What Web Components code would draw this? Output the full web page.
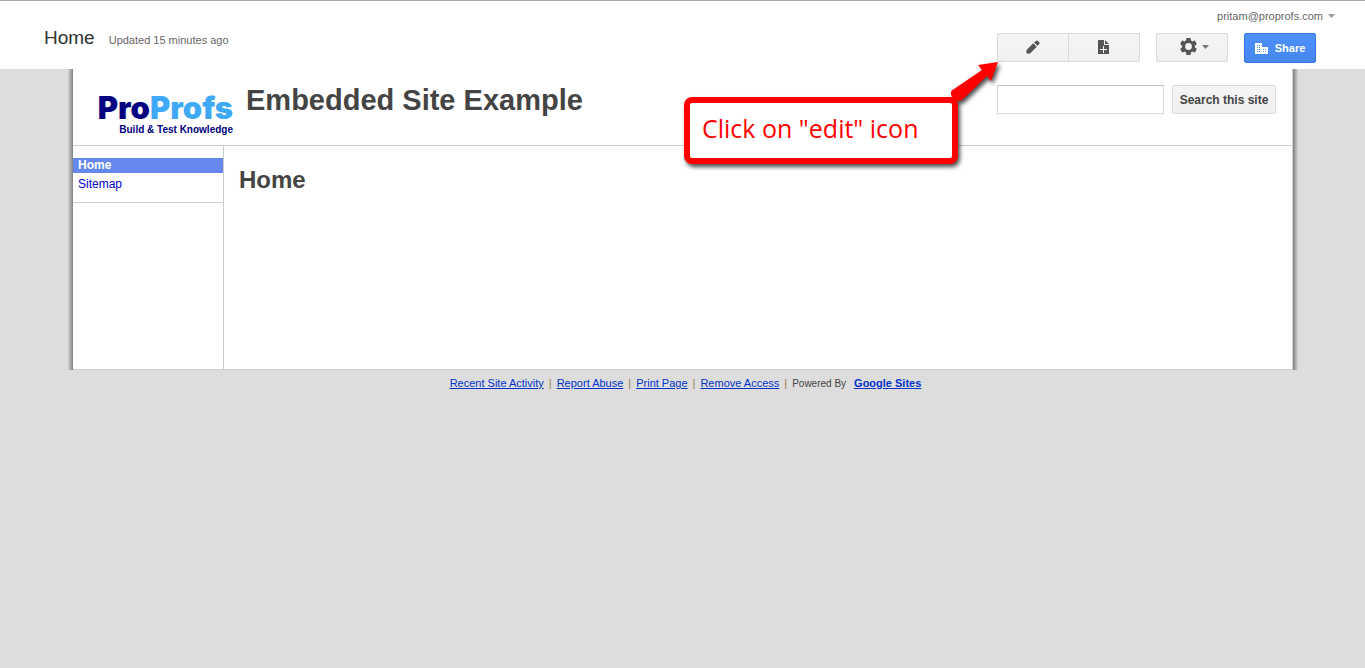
<!DOCTYPE html>
<html lang="en">
<head>
<meta charset="utf-8">
<title>Embedded Site Example</title>
<style>
body { margin: 0; background: #ddd; font: 11px/16px "Liberation Sans", Arial, sans-serif; color: #444; }
</style>
</head>
<body>
<sites-page></sites-page>
<script>
function define(name, html) {
  const template = document.createElement('template');
  template.innerHTML = html;
  customElements.define(name, class extends HTMLElement {
    constructor() {
      super();
      this.attachShadow({ mode: 'open' }).append(template.content.cloneNode(true));
    }
  });
}

define('tool-button', `
<style>
:host { display: block; }
button { display: flex; align-items: center; justify-content: center; gap: 5px; box-sizing: border-box; width: 100%; height: 29px; padding: 0 8px;
  border: 1px solid #dadada; border-radius: 2px; background: linear-gradient(#f5f5f5, #f0f0f0); color: #444; font: bold 12px/16px "Liberation Sans", Arial, sans-serif; white-space: nowrap; }
:host([icon]) button { padding-bottom: 2px; }
:host([icon=menu]) button { padding-left: 12px; }
:host([joined=left]) button { border-radius: 2px 0 0 2px; }
:host([joined=right]) button { border-radius: 0 2px 2px 0; border-left: 0; }
:host([primary]) button { height: 30px; gap: 7px; font-size: 11px; color: #fff; border-color: #3079ed; background: linear-gradient(#4d90fe, #4787ed); }
</style>
<button type="button"><slot></slot></button>`);

define('top-bar', `
<style>
:host { display: flex; justify-content: space-between; background: #fff; border-top: 1px solid #a6a6a6; height: 68px; }
.title { display: flex; align-items: baseline; gap: 14px; padding: 24px 0 0 44px; color: #666; }
.title b { font-weight: normal; font-size: 19px; line-height: 26px; color: #333; }
.account { display: flex; justify-content: flex-end; align-items: center; gap: 5px; padding: 7px 30px 0 0; color: #666; }
.account a { color: inherit; text-decoration: none; }
.tools { display: flex; gap: 16px; padding: 9px 49px 0 0; }
.pair { display: flex; width: 143px; }
tool-button { width: 72px; }
svg { display: block; flex: none; }
</style>
<div class="title"><b>Home</b><span>Updated 15 minutes ago</span></div>
<div>
  <div class="account"><a href="#">pritam@proprofs.com</a><svg width="7" height="4" fill="#999"><path d="M0 0h7L3.500 4z"/></svg></div>
  <div class="tools">
    <div class="pair">
      <tool-button icon joined="left" aria-label="Edit page"><svg width="14" height="14" viewBox="0 0 14 14" fill="#555"><path d="M.5 10v3.500H4L10.800 6.700l-3.500-3.500zM8.200 2.400l3.400 3.400 1.500-1.500c.7-.7.7-1.300 0-2L11.800.900c-.7-.7-1.400-.7-2 0z"/></svg></tool-button>
      <tool-button icon joined="right" aria-label="New page"><svg width="11" height="14" viewBox="0 0 11 14"><path fill="#555" d="M0 0h7l4 4v10H0z"/><path stroke="#fff" fill="none" d="M6.500 0v4.500H11M5.500 6v7M2 9.500h7"/></svg></tool-button>
    </div>
    <tool-button icon="menu" aria-label="Settings"><svg width="17" height="17" viewBox="2 2 20 20" fill="#555"><path d="M19.430 12.980c.04-.32.07-.64.07-.98s-.03-.66-.07-.98l2.110-1.650c.19-.15.24-.42.12-.64l-2-3.460c-.12-.22-.39-.3-.61-.22l-2.490 1c-.52-.4-1.080-.73-1.690-.98l-.38-2.650C14.460 2.180 14.250 2 14 2h-4c-.25 0-.46.18-.49.42l-.38 2.650c-.61.25-1.170.59-1.690.98l-2.490-1c-.23-.09-.49 0-.61.22l-2 3.460c-.13.22-.07.49.12.64l2.110 1.650c-.04.32-.07.65-.07.98s.03.66.07.98l-2.110 1.650c-.19.15-.24.42-.12.64l2 3.460c.12.22.39.3.61.22l2.490-1c.52.4 1.080.73 1.690.98l.38 2.650c.03.24.24.42.49.42h4c.25 0 .46-.18.49-.42l.38-2.650c.61-.25 1.170-.59 1.690-.98l2.490 1c.23.09.49 0 .61-.22l2-3.460c.12-.22.07-.49-.12-.64zM12 16a4 4 0 1 1 0-8 4 4 0 0 1 0 8z"/></svg><svg width="7" height="4" fill="#777"><path d="M0 0h7L3.500 4z"/></svg></tool-button>
    <tool-button primary><svg width="13" height="11" shape-rendering="crispEdges"><path fill="#fff" d="M0 0h7v4h6v7H0z"/><path fill="#4b8cf6" d="M2 2h1v1H2zM4 2h1v1H4zM2 4h1v1H2zM4 4h1v1H4zM2 6h1v1H2zM4 6h1v1H4zM2 8h1v1H2zM4 8h1v1H4zM8 6h1v1H8zM10 6h1v1h-1zM8 8h1v1H8zM10 8h1v1h-1z"/></svg>Share</tool-button>
  </div>
</div>`);

define('site-logo', `
<style>
:host { display: flex; flex-direction: column; align-items: flex-end; width: 136px; color: #000080; white-space: nowrap; }
.name { font: 900 31px/28px Inter, sans-serif; }
.name span { color: #3fa9f5; }
.tag { font: bold 10px/16px "Liberation Sans", Arial, sans-serif; }
</style>
<div class="name">Pro<span>Profs</span></div><div class="tag">Build &amp; Test Knowledge</div>`);

define('site-search', `
<style>
:host { display: block; }
form { display: flex; gap: 8px; margin: 0; }
input { box-sizing: border-box; width: 167px; height: 29px; margin: 0; padding: 0 8px; border: 1px solid #d9d9d9; border-top-color: #c0c0c0; background: #fff; font: inherit; }
tool-button { width: 104px; }
</style>
<form><input type="text" aria-label="Search this site"><tool-button>Search this site</tool-button></form>`);

define('call-out', `
<style>
:host { display: block; width: 274px; filter: drop-shadow(2px 3px 2px rgba(0,0,0,.7)); }
.box { box-sizing: border-box; height: 67px; padding: 0 12px; border: 6px solid #f00; border-radius: 8px; background: #fff; color: #f00; font: 25px/50px "Open Sans", "Segoe UI", sans-serif; white-space: nowrap; }
svg { position: absolute; left: 266px; top: -36px; }
</style>
<svg width="50" height="44" fill="#f00"><path d="M48 1 41 20 37 15 12 39Q5 42 2 36T4 28L32 9 28 4Z"/></svg>
<div class="box">Click on "edit" icon</div>`);

define('site-header', `
<style>
:host { display: flex; position: relative; height: 76px; border-bottom: 1px solid #ccc; }
site-logo { margin: 25px 13px 0 24px; }
h1 { flex: 1; margin: 14px 0 0; font-size: 29px; line-height: 34px; white-space: nowrap; }
site-search { margin: 16px 16px 0 0; }
call-out { position: absolute; right: 334px; top: 28px; z-index: 1; }
</style>
<site-logo></site-logo><h1>Embedded Site Example</h1><site-search></site-search><call-out></call-out>`);

define('site-nav', `
<style>
:host { display: block; box-sizing: border-box; width: 151px; border-right: 1px solid #ccc; }
nav { padding: 12px 0 10px; border-bottom: 1px solid #ccc; font-size: 12px; }
a { display: block; padding: 0 5px; line-height: 15px; color: #0000cc; text-decoration: none; }
a[aria-current] { background: #6688ee; color: #fff; font-weight: bold; margin-bottom: 4px; }
</style>
<nav><a href="#" aria-current="page">Home</a><a href="#">Sitemap</a></nav>`);

define('site-footer', `
<style>
:host { display: flex; justify-content: center; align-items: baseline; padding: 5px 0 0 6px; line-height: 16px; white-space: nowrap; }
a { color: #0033cc; }
i { font-style: normal; color: #97784f; margin: 0 5px; }
small { font-size: 10px; margin-right: 8px; }
</style>
<a href="#">Recent Site Activity</a><i>|</i><a href="#">Report Abuse</a><i>|</i><a href="#">Print Page</a><i>|</i><a href="#">Remove Access</a><i>|</i><small>Powered By</small><a href="#"><b>Google Sites</b></a>`);

define('sites-page', `
<style>
:host { display: block; }
.site { margin: 0 72px 0 73px; background: #fff; border: solid #ccc; border-width: 0 1px 1px 0; position: relative; }
.site::before, .site::after { content: ""; position: absolute; top: 0; bottom: -1px; width: 5px; background: linear-gradient(to left, #808080, #aaa 50%, #d4d4d4); }
.site::before { right: 100%; }
.site::after { left: calc(100% + 1px); transform: scaleX(-1); }
.content { display: flex; min-height: 223px; }
h2 { margin: 20px 15px; font-size: 24px; line-height: 28px; }
</style>
<top-bar></top-bar>
<div class="site"><site-header></site-header>
<div class="content"><site-nav></site-nav><main><h2>Home</h2></main></div></div>
<site-footer></site-footer>`);
</script>
</body>
</html>
